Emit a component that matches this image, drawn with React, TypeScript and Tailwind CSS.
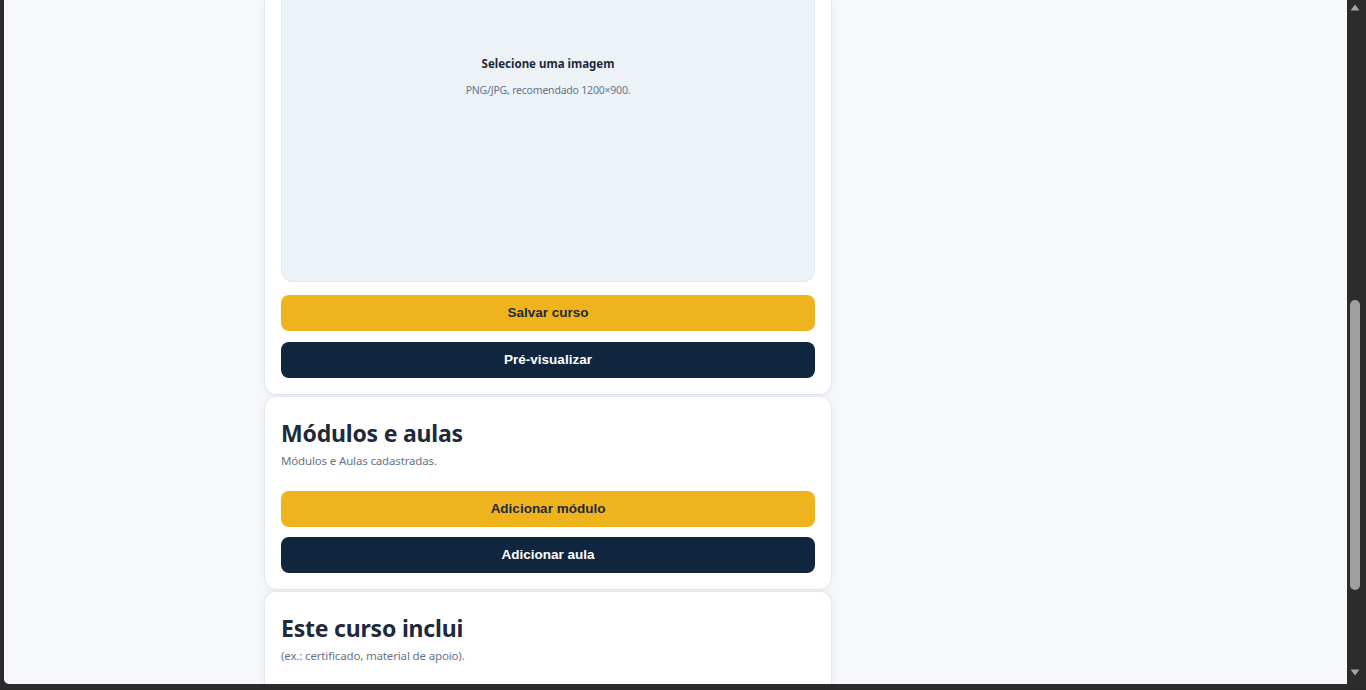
import React from "react";

const sans = "font-['Noto_Sans','Open_Sans',sans-serif]";
const arial = "font-['Liberation_Sans',Arial,sans-serif]";

function Btn({ label, kind }: { label: string; kind: "yellow" | "navy" }) {
  return (
    <button
      className={
        "h-9 w-full rounded-lg text-[13.5px] font-bold " +
        arial +
        (kind === "yellow" ? " bg-[#efb41d] text-[#1e293b]" : " bg-[#10263f] text-white")
      }
    >
      {label}
    </button>
  );
}

function Card({ title, sub, children, last }: { title: string; sub: string; children?: React.ReactNode; last?: boolean }) {
  return (
    <section
      className={
        "mt-[1px] w-[568px] border border-[#e2e8f0] bg-white px-4 pt-5 shadow-[0_0_8px_rgba(15,23,42,0.06)] " +
        (last ? "rounded-t-xl border-b-0 flex-1" : "rounded-xl pb-4")
      }
    >
      <h2 className={"text-[23px] leading-8 font-bold tracking-[-0.2px] text-[#1e293b] " + sans}>{title}</h2>
      <p className={"mt-1 text-[11.5px] leading-4 tracking-[-0.15px] text-[#64748b] " + sans}>{sub}</p>
      {children}
    </section>
  );
}

export default function App() {
  return (
    <div className="flex h-[690px] w-[1366px] flex-col overflow-hidden bg-[#2b2b2b]">
      <div className="flex min-h-0 flex-1">
        <div className="w-[4px] bg-[#2b2b2b]" />
        <main className="flex min-w-0 flex-1 flex-col overflow-hidden rounded-bl-[5px] bg-[#f7f8fc] pl-[260px]">
          {/* Card 1 (top part scrolled off) */}
          <section className="w-[568px] rounded-b-xl border-x border-b border-[#e2e8f0] bg-white px-4 pb-4 shadow-[0_0_8px_rgba(15,23,42,0.06)]">
            <div className="flex h-[282px] flex-col items-center rounded-b-xl border-x border-b border-[#e2e8f0] bg-[#edf2f7] pt-[56px]">
              <p className={"text-[11.5px] leading-4 font-bold text-[#1e293b] " + sans}>Selecione uma imagem</p>
              <p className={"mt-[10px] text-[10.5px] leading-4 tracking-[-0.2px] text-[#64748b] " + sans}>PNG/JPG, recomendado 1200×900.</p>
            </div>
            <div className="mt-[13px] flex flex-col gap-[11px]">
              <Btn label="Salvar curso" kind="yellow" />
              <Btn label="Pré-visualizar" kind="navy" />
            </div>
          </section>

          <Card title="Módulos e aulas" sub="Módulos e Aulas cadastradas.">
            <div className="mt-[22px] flex flex-col gap-2.5">
              <Btn label="Adicionar módulo" kind="yellow" />
              <Btn label="Adicionar aula" kind="navy" />
            </div>
          </Card>

          <Card title="Este curso inclui" sub="(ex.: certificado, material de apoio)." last />
        </main>
        {/* scrollbar */}
        <div className="flex w-[19px] flex-col bg-[#2c2c2c] pl-[3px] pt-[4px] pb-[8px]">
          <svg width="10" height="7" viewBox="0 0 10 7">
            <path d="M5 0.5 L9.5 6.5 L0.5 6.5 Z" fill="#a3a3a3" />
          </svg>
          <div className="mt-[289px] h-[290px] w-[10px] rounded-full bg-[#9f9f9f]" />
          <div className="flex-1" />
          <svg width="10" height="7" viewBox="0 0 10 7">
            <path d="M0.5 0.5 L9.5 0.5 L5 6.5 Z" fill="#a3a3a3" />
          </svg>
        </div>
      </div>
      <div className="h-[6px] bg-[#2b2b2b]" />
    </div>
  );
}
